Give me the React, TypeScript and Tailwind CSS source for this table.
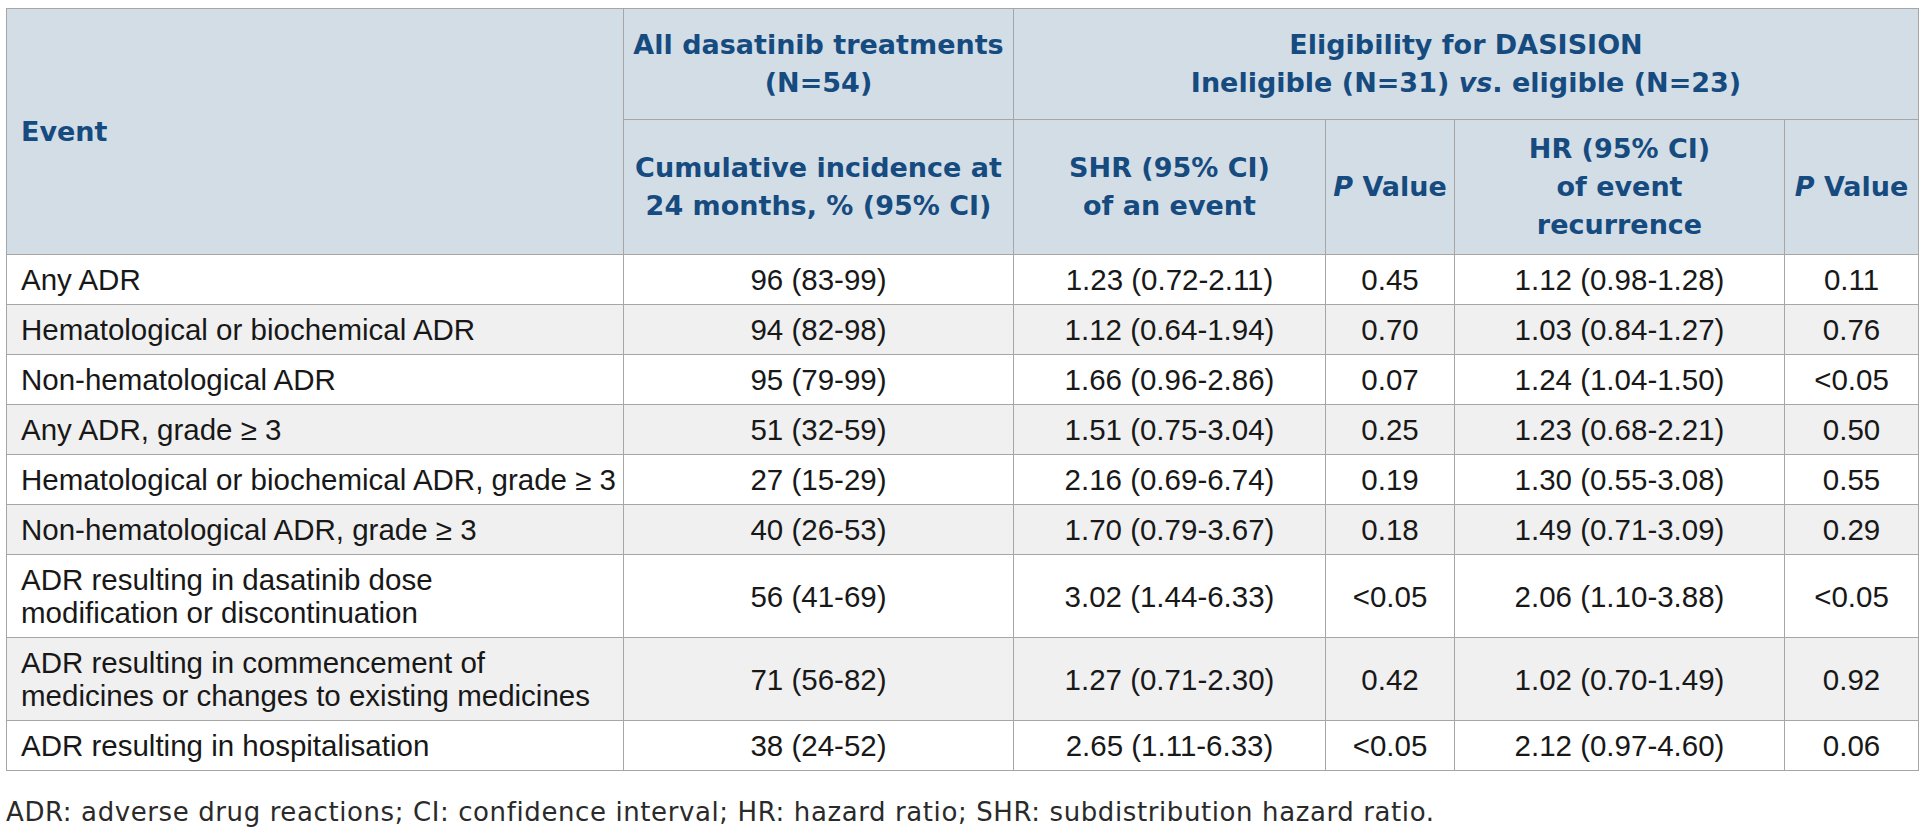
import React from "react";

type Row = {
  event: string[];
  cum: string;
  shr: string;
  p1: string;
  hr: string;
  p2: string;
};

const rows: Row[] = [
  { event: ["Any ADR"], cum: "96 (83-99)", shr: "1.23 (0.72-2.11)", p1: "0.45", hr: "1.12 (0.98-1.28)", p2: "0.11" },
  { event: ["Hematological or biochemical ADR"], cum: "94 (82-98)", shr: "1.12 (0.64-1.94)", p1: "0.70", hr: "1.03 (0.84-1.27)", p2: "0.76" },
  { event: ["Non-hematological ADR"], cum: "95 (79-99)", shr: "1.66 (0.96-2.86)", p1: "0.07", hr: "1.24 (1.04-1.50)", p2: "<0.05" },
  { event: ["Any ADR, grade ≥ 3"], cum: "51 (32-59)", shr: "1.51 (0.75-3.04)", p1: "0.25", hr: "1.23 (0.68-2.21)", p2: "0.50" },
  { event: ["Hematological or biochemical ADR, grade ≥ 3"], cum: "27 (15-29)", shr: "2.16 (0.69-6.74)", p1: "0.19", hr: "1.30 (0.55-3.08)", p2: "0.55" },
  { event: ["Non-hematological ADR, grade ≥ 3"], cum: "40 (26-53)", shr: "1.70 (0.79-3.67)", p1: "0.18", hr: "1.49 (0.71-3.09)", p2: "0.29" },
  { event: ["ADR resulting in dasatinib dose", "modification or discontinuation"], cum: "56 (41-69)", shr: "3.02 (1.44-6.33)", p1: "<0.05", hr: "2.06 (1.10-3.88)", p2: "<0.05" },
  { event: ["ADR resulting in commencement of", "medicines or changes to existing medicines"], cum: "71 (56-82)", shr: "1.27 (0.71-2.30)", p1: "0.42", hr: "1.02 (0.70-1.49)", p2: "0.92" },
  { event: ["ADR resulting in hospitalisation"], cum: "38 (24-52)", shr: "2.65 (1.11-6.33)", p1: "<0.05", hr: "2.12 (0.97-4.60)", p2: "0.06" },
];

const th = "border border-[#a6a6a6] bg-[#d3dde6] text-[#164b7f] font-bold align-middle text-center px-1";
const td = "border border-[#a6a6a6] align-middle text-center px-1 py-2 whitespace-nowrap";

export default function App() {
  return (
    <div className="min-h-screen bg-white pt-[8px] pl-[6px]">
      {/* results table */}
      <table className="table-fixed border-collapse w-[1912px] text-[#181818] font-['Liberation_Sans',Arial,sans-serif] text-[29.5px] leading-[33px]">
        <colgroup>
          <col className="w-[617px]" />
          <col className="w-[390px]" />
          <col className="w-[312px]" />
          <col className="w-[129px]" />
          <col className="w-[330px]" />
          <col className="w-[134px]" />
        </colgroup>
        <thead className="font-['DejaVu_Sans',sans-serif] text-[27px] leading-[38px]">
          <tr className="h-[111px]">
            <th rowSpan={2} className={`${th} !text-left pl-[14px]`}>Event</th>
            <th className={th}>
              All dasatinib treatments
              <br />
              (N=54)
            </th>
            <th colSpan={4} className={th}>
              Eligibility for DASISION
              <br />
              Ineligible (N=31) <i>vs</i>. eligible (N=23)
            </th>
          </tr>
          <tr className="h-[135px]">
            <th className={th}>
              Cumulative incidence at
              <br />
              24 months, % (95% CI)
            </th>
            <th className={th}>
              SHR (95% CI)
              <br />
              of an event
            </th>
            <th className={`${th} whitespace-nowrap`}>
              <i>P</i> Value
            </th>
            <th className={th}>
              HR (95% CI)
              <br />
              of event
              <br />
              recurrence
            </th>
            <th className={`${th} whitespace-nowrap`}>
              <i>P</i> Value
            </th>
          </tr>
        </thead>
        <tbody>
          {rows.map((r, i) => (
            <tr key={i} className={i % 2 === 1 ? "bg-[#f0f0f0]" : "bg-white"}>
              <td className={`${td} !text-left pl-[14px]`}>
                {r.event.map((l, j) => (
                  <div key={j}>{l}</div>
                ))}
              </td>
              <td className={td}>{r.cum}</td>
              <td className={td}>{r.shr}</td>
              <td className={td}>{r.p1}</td>
              <td className={td}>{r.hr}</td>
              <td className={td}>{r.p2}</td>
            </tr>
          ))}
        </tbody>
      </table>
      <p className="mt-[26px] font-['DejaVu_Sans',sans-serif] text-[26px] leading-[30px] tracking-[0.6px] text-[#2a2a2a]">
        ADR: adverse drug reactions; CI: confidence interval; HR: hazard ratio; SHR: subdistribution hazard ratio.
      </p>
    </div>
  );
}
